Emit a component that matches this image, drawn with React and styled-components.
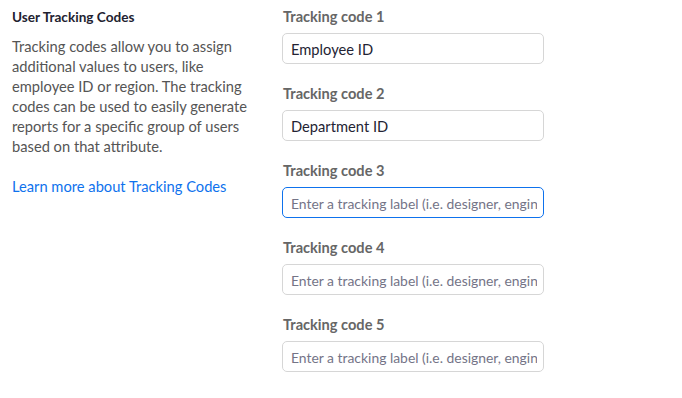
import React from 'react';
import styled, { createGlobalStyle } from 'styled-components';

const GlobalStyle = createGlobalStyle`
  body {
    margin: 0;
    background: #fff;
    font-family: Lato, "Open Sans", sans-serif;
  }
`;

const Page = styled.div`
  display: flex;
  flex-direction: row;
  padding: 7px 0 0 12px;
  width: 682px;
  height: 398px;
  box-sizing: border-box;
`;

const Aside = styled.div`
  width: 240px;
  margin-right: 30px;
`;

const Heading = styled.h3`
  margin: 0 0 9px;
  font-size: 13.6px;
  line-height: 20px;
  font-weight: 700;
  color: #222230;
`;

const Description = styled.p`
  margin: 0 0 20px;
  font-size: 14.7px;
  line-height: 20px;
  color: #555;
`;

const LearnMore = styled.a`
  font-size: 14.7px;
  line-height: 20px;
  color: #0e72ed;
  text-decoration: none;
`;

const Fields = styled.div`
  display: flex;
  flex-direction: column;
  width: 262px;
`;

const Field = styled.div`
  display: flex;
  flex-direction: column;
  margin-bottom: 20px;
`;

const Label = styled.label`
  font-size: 14.6px;
  line-height: 20px;
  font-weight: 700;
  color: #666;
  padding-left: 1px;
  margin-bottom: 6px;
`;

const Input = styled.input`
  box-sizing: border-box;
  height: 31px;
  width: 262px;
  padding: 0 6px 0 8px;
  border: 1px solid ${(p) => (p.$focused ? '#0e72ed' : '#d6d6d6')};
  border-radius: 5px;
  font-family: Lato, "Open Sans", sans-serif;
  font-size: 14.7px;
  color: #232333;
  outline: none;

  &::placeholder {
    color: #747487;
    font-size: 13.9px;
  }
`;

const fields = [
  { label: 'Tracking code 1', value: 'Employee ID' },
  { label: 'Tracking code 2', value: 'Department ID' },
  { label: 'Tracking code 3', value: '', focused: true },
  { label: 'Tracking code 4', value: '' },
  { label: 'Tracking code 5', value: '' },
];

export default function App() {
  return (
    <>
      <GlobalStyle />
      <Page>
        <Aside>
          <Heading>User Tracking Codes</Heading>
          <Description>
            Tracking codes allow you to assign additional values to users, like
            employee ID or region. The tracking codes can be used to easily
            generate reports for a specific group of users based on that
            attribute.
          </Description>
          <LearnMore href="#">Learn more about Tracking Codes</LearnMore>
        </Aside>
        <Fields>
          {fields.map((f) => (
            <Field key={f.label}>
              <Label>{f.label}</Label>
              <Input
                defaultValue={f.value}
                $focused={f.focused}
                placeholder="Enter a tracking label (i.e. designer, engineer)"
              />
            </Field>
          ))}
        </Fields>
      </Page>
    </>
  );
}
